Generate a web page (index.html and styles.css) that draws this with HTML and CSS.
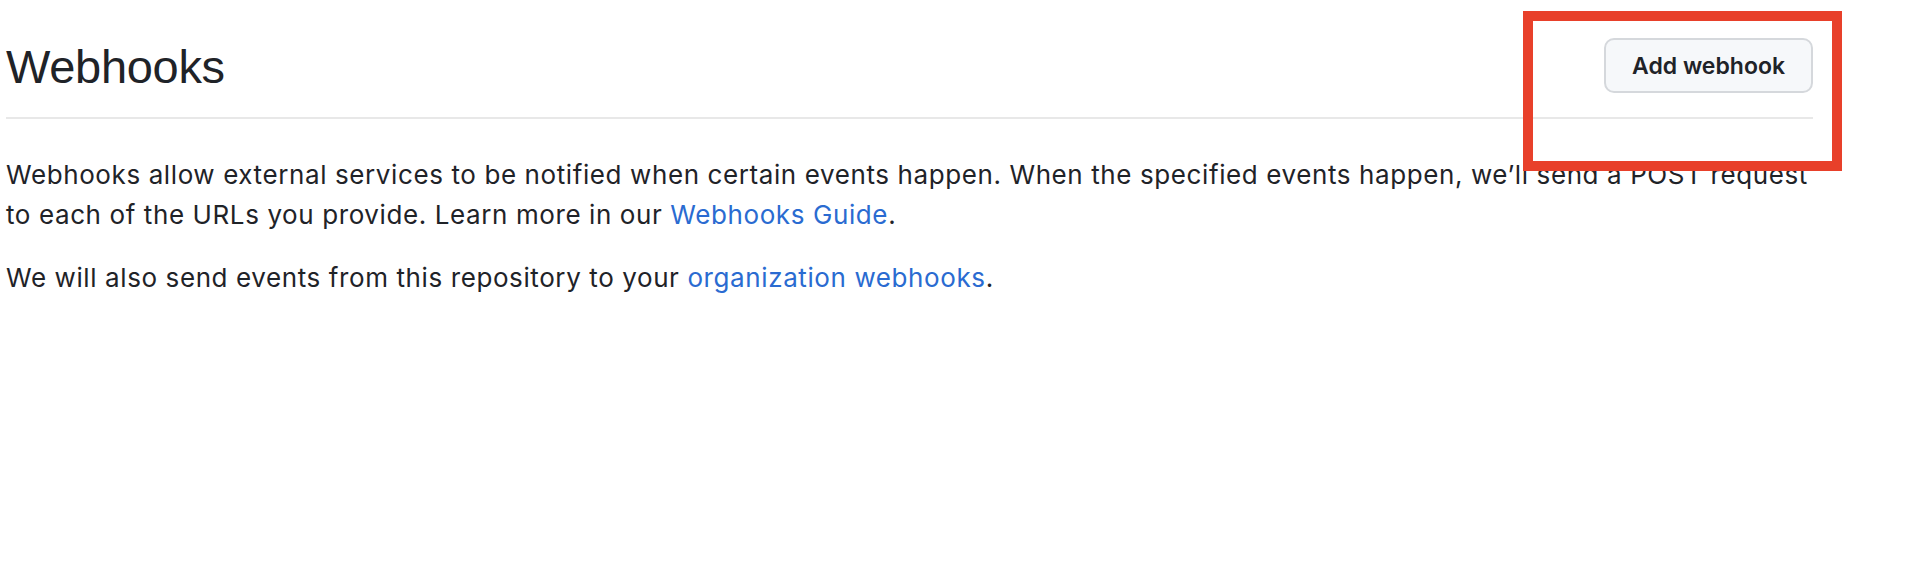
FILE: index.html
```html
<!DOCTYPE html>
<html lang="en">
<head>
<meta charset="utf-8">
<title>Webhooks</title>
<link rel="stylesheet" href="styles.css">
</head>
<body>
<main class="page">
  <header class="subhead">
    <h2 class="subhead-title">Webhooks</h2>
    <button class="btn" type="button">Add webhook</button>
  </header>
  <p class="text">Webhooks allow external services to be notified when certain events happen. When the specified events happen, we’ll send a POST request to each of the URLs you provide. Learn more in our <a class="link" href="#">Webhooks Guide</a>.</p>
  <p class="text">We will also send events from this repository to your <a class="link" href="#">organization webhooks</a>.</p>
  <div class="highlight"></div>
</main>
</body>
</html>
```
FILE: styles.css
```css
html, body {
  margin: 0;
  padding: 0;
  background: #ffffff;
}
body {
  font-family: Inter, "Liberation Sans", Arial, sans-serif;
  color: #1f2328;
}
.page {
  width: 1807px;
  padding-left: 6px;
}
.subhead {
  display: flex;
  justify-content: space-between;
  align-items: center;
  padding-top: 38px;
  padding-bottom: 24px;
  border-bottom: 2px solid #e8e8e8;
}
.subhead-title {
  margin: 0;
  padding-top: 3px;
  font-family: "Liberation Sans", Arial, sans-serif;
  font-size: 47px;
  font-weight: 400;
  line-height: 52px;
  letter-spacing: -0.3px;
}
.btn {
  height: 55px;
  width: 209px;
  padding: 0;
  font-family: Inter, "Liberation Sans", Arial, sans-serif;
  font-size: 23px;
  font-weight: 600;
  color: #1f2328;
  background: #f6f8fa;
  border: 2px solid #d5d8dc;
  border-radius: 10px;
}
.text {
  margin: 36px 0 0 0;
  font-size: 26px;
  line-height: 40px;
  letter-spacing: 0.6px;
}
.text + .text {
  margin-top: 23px;
}
.link {
  color: #2a6bd1;
  text-decoration: none;
}
.highlight {
  position: absolute;
  left: 1523px;
  top: 11px;
  width: 299px;
  height: 140px;
  border: 10px solid #e8402a;
}
```
